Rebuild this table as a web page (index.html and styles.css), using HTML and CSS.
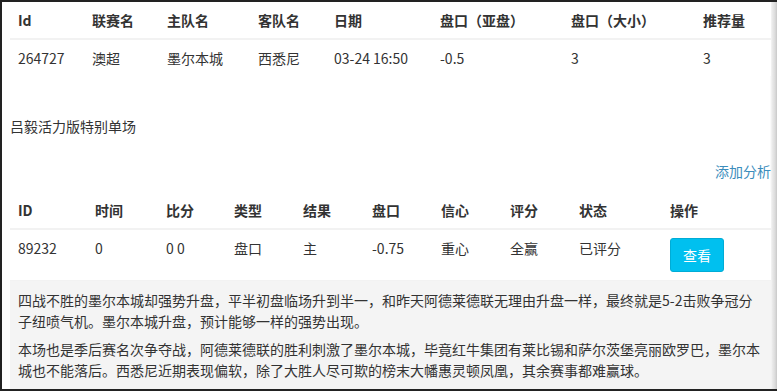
FILE: index.html
```html
<!DOCTYPE html>
<html lang="zh-CN">
<head>
<meta charset="utf-8">
<title>推荐</title>
<link rel="stylesheet" href="styles.css">
</head>
<body>
<div class="frame">
  <table class="tbl tbl-match">
    <thead>
      <tr>
        <th class="m1">Id</th>
        <th class="m2">联赛名</th>
        <th class="m3">主队名</th>
        <th class="m4">客队名</th>
        <th class="m5">日期</th>
        <th class="m6">盘口（亚盘）</th>
        <th class="m7">盘口（大小）</th>
        <th class="m8">推荐量</th>
      </tr>
    </thead>
    <tbody>
      <tr>
        <td>264727</td>
        <td>澳超</td>
        <td>墨尔本城</td>
        <td>西悉尼</td>
        <td>03-24 16:50</td>
        <td>-0.5</td>
        <td>3</td>
        <td>3</td>
      </tr>
    </tbody>
  </table>

  <h3 class="section-title">吕毅活力版特别单场</h3>

  <div class="actions"><a class="link" href="#">添加分析</a></div>

  <table class="tbl tbl-analysis">
    <thead>
      <tr>
        <th class="a1">ID</th>
        <th class="a2">时间</th>
        <th class="a3">比分</th>
        <th class="a4">类型</th>
        <th class="a5">结果</th>
        <th class="a6">盘口</th>
        <th class="a7">信心</th>
        <th class="a8">评分</th>
        <th class="a9">状态</th>
        <th class="a10">操作</th>
      </tr>
    </thead>
    <tbody>
      <tr>
        <td>89232</td>
        <td>0</td>
        <td>0 0</td>
        <td>盘口</td>
        <td>主</td>
        <td>-0.75</td>
        <td>重心</td>
        <td>全赢</td>
        <td>已评分</td>
        <td><button class="btn-info" type="button">查看</button></td>
      </tr>
    </tbody>
  </table>

  <div class="analysis">
    <p>四战不胜的墨尔本城却强势升盘，平半初盘临场升到半一，和昨天阿德莱德联无理由升盘一样，最终就是5-2击败争冠分子纽喷气机。墨尔本城升盘，预计能够一样的强势出现。</p>
    <p>本场也是季后赛名次争夺战，阿德莱德联的胜利刺激了墨尔本城，毕竟红牛集团有莱比锡和萨尔茨堡亮丽欧罗巴，墨尔本城也不能落后。西悉尼近期表现偏软，除了大胜人尽可欺的榜末大幡惠灵顿凤凰，其余赛事都难赢球。</p>
  </div>
</div>
</body>
</html>
```

FILE: styles.css
```css
* { box-sizing: border-box; }

html, body {
  margin: 0;
  padding: 0;
  background: #fff;
}

body {
  font-family: "Noto Sans CJK SC", "Liberation Sans", sans-serif;
  font-size: 14px;
  line-height: 20px;
  color: #333;
}

.frame {
  width: 777px;
  height: 391px;
  overflow: hidden;
  border-left: 2px solid #222;
  border-top: 2px solid #222;
  border-bottom: 2px solid #222;
  padding: 0 6px 0 8px;
  background: linear-gradient(to left, #c8c8c8 0, #dcdcdc 2px, #ececec 5px, #fff 7px) no-repeat;
  display: flex;
  flex-direction: column;
}

.tbl {
  width: 761px;
  border-collapse: collapse;
  table-layout: fixed;
  background: #fff;
}

.tbl th,
.tbl td {
  padding: 8px;
  text-align: left;
  vertical-align: top;
  white-space: nowrap;
}

.tbl th {
  font-weight: bold;
  color: #333;
  border-bottom: 2px solid #f2f2f2;
}

.tbl td {
  font-weight: normal;
}

.m1 { width: 74px; }
.m2 { width: 75px; }
.m3 { width: 91px; }
.m4 { width: 76px; }
.m5 { width: 106px; }
.m6 { width: 131px; }
.m7 { width: 132px; }
.m8 { width: 76px; }

.a1 { width: 77px; }
.a2 { width: 71px; }
.a3 { width: 68px; }
.a4 { width: 69px; }
.a5 { width: 69px; }
.a6 { width: 69px; }
.a7 { width: 69px; }
.a8 { width: 69px; }
.a9 { width: 91px; }
.a10 { width: 109px; }

.section-title {
  margin: 40px 0 0;
  font-size: 14px;
  font-weight: normal;
  line-height: 20px;
  color: #333;
}

.actions {
  margin-top: 25px;
  display: flex;
  justify-content: flex-end;
  width: 761px;
}

.link {
  color: #3c8dbc;
  text-decoration: none;
}

.tbl-analysis {
  margin-top: 11px;
}

.tbl-analysis td {
  border-bottom: 1px solid #f2f2f2;
}

.btn-info {
  font-family: inherit;
  font-size: 14px;
  line-height: 20px;
  padding: 6px 12px;
  color: #fff;
  background: #00c0ef;
  border: 1px solid #00acd6;
  border-radius: 3px;
  cursor: pointer;
}

.analysis {
  width: 761px;
  background: #f4f4f4;
  padding: 9px 8px 8px;
  flex: 1;
}

.analysis p {
  margin: 0 0 7px;
  line-height: 21px;
}
```
